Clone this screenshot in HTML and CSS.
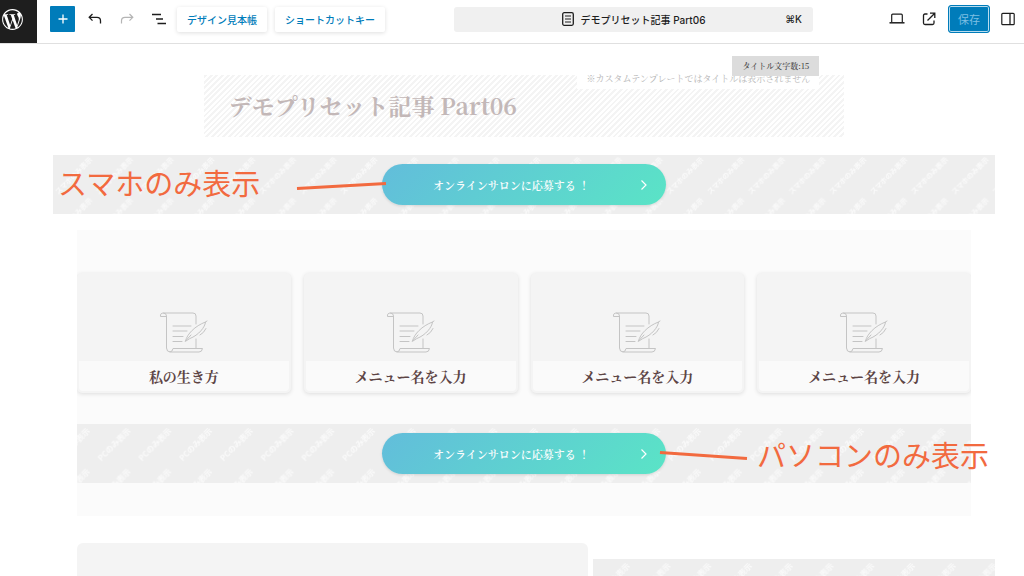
FILE: index.html
```html
<!DOCTYPE html>
<html lang="ja">
<head>
<meta charset="utf-8">
<meta name="viewport" content="width=device-width, initial-scale=1">
<title>デモプリセット記事 Part06</title>
<link rel="stylesheet" href="styles.css">
</head>
<body>
<svg class="defs" aria-hidden="true">
  <defs>
    <pattern id="sp-only" width="40.75" height="40.75" patternUnits="userSpaceOnUse">
      <text class="mark" x="20.4" y="20.4" dy="3" transform="rotate(-45 20.4 20.4)">スマホのみ表示</text>
    </pattern>
    <pattern id="pc-only" width="40.75" height="40.75" patternUnits="userSpaceOnUse">
      <text class="mark mark-pc" x="20.4" y="20.4" dy="3" transform="rotate(-45 20.4 20.4)">PCのみ表示</text>
    </pattern>
    <pattern id="pc-only-inset" width="40.75" height="40.75" patternUnits="userSpaceOnUse" patternTransform="translate(-24 0)">
      <text class="mark mark-pc" x="20.4" y="20.4" dy="3" transform="rotate(-45 20.4 20.4)">PCのみ表示</text>
    </pattern>
    <symbol id="scroll" viewBox="0 0 50 42">
      <g fill="none" stroke="#c4c4c4" stroke-width="1" stroke-linecap="round" stroke-linejoin="round">
        <path d="M7.500 4.500H1.500C1 2 2.500 1 4.500 1H34q3 0 3 3v8M4.500 1q3 0 3 3v32q0 4 4 4H40q3 0 3.500-3.500H14q-.5 3.500-3 3.500M37 27v9"/>
        <path d="M14 14h18M14 19h14M14 24.500h10M14 29.500h9"/>
        <path d="M26.500 29C28 22 36 14 46.500 10C46 15 40 23 31 26.500zM26.500 29L32 23M46.500 10l1.500-1M47 16.500Q45 21 41 23"/>
      </g>
    </symbol>
  </defs>
</svg>

<header class="toolbar">
  <a class="wp" href="#" aria-label="WordPress">
    <svg width="25" height="25" viewBox="0 0 24 24" aria-hidden="true"><path fill="#fff" d="M12.158 12.786L9.460 20.625c.806.237 1.657.366 2.540.366 1.047 0 2.051-.181 2.986-.510-.024-.038-.046-.079-.065-.124l-2.763-7.571zM3.009 12c0 3.559 2.068 6.634 5.067 8.092L3.788 8.341C3.289 9.459 3.009 10.696 3.009 12zm15.060-.454c0-1.112-.399-1.881-.741-2.480-.456-.741-.883-1.368-.883-2.109 0-.826.627-1.596 1.510-1.596.040 0 .078.005.116.007C16.472 3.904 14.340 3.009 12 3.009c-3.141 0-5.904 1.612-7.512 4.052.211.007.410.011.579.011.940 0 2.396-.114 2.396-.114.484-.028.541.684.057.741 0 0-.487.057-1.029.085l3.274 9.739 1.968-5.901-1.401-3.838c-.484-.028-.943-.085-.943-.085-.485-.029-.428-.769.057-.741 0 0 1.484.114 2.368.114.940 0 2.397-.114 2.397-.114.485-.028.542.684.057.741 0 0-.488.057-1.029.085l3.249 9.665.897-2.996c.456-1.169.684-2.137.684-2.907zm1.820-3.860c.039.286.060.593.060.924 0 .912-.171 1.938-.684 3.220l-2.746 7.940c2.673-1.558 4.470-4.454 4.470-7.771 0-1.563-.399-3.033-1.100-4.313zM12 22C6.486 22 2 17.514 2 12S6.486 2 12 2s10 4.486 10 10-4.486 10-10 10z"/></svg>
  </a>
  <div class="tools">
    <button class="add" type="button" aria-label="追加"><svg width="12" height="12" viewBox="0 0 12 12"><path d="M6 1.500v9M1.500 6h9" stroke="#fff" stroke-width="1.300"/></svg></button>
    <button class="icon" type="button" aria-label="元に戻す"><svg width="14" height="12" viewBox="0 0 14 12"><path d="M4.500 1L1.200 4.300l3.300 3.300M1.200 4.300H9q3.500 0 3.500 3.500v2.700" fill="none" stroke="#1e1e1e" stroke-width="1.300"/></svg></button>
    <button class="icon" type="button" aria-label="やり直す" disabled><svg width="14" height="12" viewBox="0 0 14 12"><path d="M9.500 1l3.300 3.300-3.300 3.300M12.800 4.300H5q-3.500 0-3.500 3.500v2.700" fill="none" stroke="#b5b5b5" stroke-width="1.200"/></svg></button>
    <button class="icon" type="button" aria-label="文書の概観"><svg width="16" height="12" viewBox="0 0 16 12"><path d="M1 1.500h9M5 6h7M6.500 10.500h8.500" stroke="#1e1e1e" stroke-width="1.400"/></svg></button>
    <button class="chip" type="button">デザイン見本帳</button>
    <button class="chip" type="button">ショートカットキー</button>
  </div>
  <button class="command" type="button">
    <span class="command-title">
      <svg width="12" height="14" viewBox="0 0 12 14"><rect x=".7" y=".7" width="10.600" height="12.600" rx="1.500" fill="none" stroke="#1e1e1e" stroke-width="1.300"/><path d="M3 4h6M3 7h6M3 10h6" stroke="#1e1e1e" stroke-width="1.200"/></svg>
      デモプリセット記事 Part06
    </span>
    <kbd>⌘K</kbd>
  </button>
  <div class="actions">
    <button class="icon" type="button" aria-label="表示"><svg width="16" height="12" viewBox="0 0 16 12"><path d="M2.700 9V2.200q0-1 1-1h8.600q1 0 1 1V9" fill="none" stroke="#1e1e1e" stroke-width="1.200"/><path d="M.5 9.800h15" stroke="#1e1e1e" stroke-width="1.500"/></svg></button>
    <button class="icon" type="button" aria-label="投稿を表示"><svg width="14" height="14" viewBox="0 0 14 14"><path d="M5.500 2H3Q1.500 2 1.500 3.500V11q0 1.500 1.500 1.500h7.500q1.500 0 1.500-1.500V8.500M8 1.200h4.800V6M12.800 1.200L5.500 8.500" fill="none" stroke="#1e1e1e" stroke-width="1.300"/></svg></button>
    <button class="save" type="button">保存</button>
    <button class="icon" type="button" aria-label="設定"><svg width="14" height="14" viewBox="0 0 14 14"><rect x=".8" y="1.300" width="12.400" height="11.400" rx="1" fill="none" stroke="#1e1e1e" stroke-width="1.200"/><path d="M9 1.300v11.400" stroke="#1e1e1e" stroke-width="1.300"/></svg></button>
  </div>
</header>

<main class="canvas">
  <div class="title-block">
    <h1>デモプリセット記事 Part06</h1>
    <p class="title-note">※カスタムテンプレートではタイトルは表示されません</p>
    <p class="title-count">タイトル文字数:15</p>
  </div>

  <section class="band">
    <svg class="marks" aria-hidden="true"><rect width="100%" height="100%" fill="url(#sp-only)"/></svg>
    <p class="callout callout-start">スマホのみ表示</p>
    <div class="cta-wrap">
      <a class="cta" href="#"><span>オンラインサロンに応募する ！</span><svg width="8" height="12" viewBox="0 0 8 12"><path d="M1.500 1.500L6 6l-4.500 4.500" fill="none" stroke="#fff" stroke-width="1.200"/></svg></a>
      <svg class="pointer pointer-start" width="92" height="10" viewBox="0 0 92 10" aria-hidden="true"><path d="M1 7.500L90 2.500" stroke="#f26a3f" stroke-width="3"/></svg>
    </div>
  </section>

  <section class="group">
    <div class="cards">
      <a class="card" href="#"><span class="card-art"><svg width="50" height="42"><use href="#scroll"/></svg></span><span class="card-name">私の生き方</span></a>
      <a class="card" href="#"><span class="card-art"><svg width="50" height="42"><use href="#scroll"/></svg></span><span class="card-name">メニュー名を入力</span></a>
      <a class="card" href="#"><span class="card-art"><svg width="50" height="42"><use href="#scroll"/></svg></span><span class="card-name">メニュー名を入力</span></a>
      <a class="card" href="#"><span class="card-art"><svg width="50" height="42"><use href="#scroll"/></svg></span><span class="card-name">メニュー名を入力</span></a>
    </div>
    <div class="band">
      <svg class="marks" aria-hidden="true"><rect width="100%" height="100%" fill="url(#pc-only-inset)"/></svg>
      <div class="cta-wrap">
        <a class="cta" href="#"><span>オンラインサロンに応募する ！</span><svg width="8" height="12" viewBox="0 0 8 12"><path d="M1.500 1.500L6 6l-4.500 4.500" fill="none" stroke="#fff" stroke-width="1.200"/></svg></a>
        <svg class="pointer pointer-end" width="90" height="12" viewBox="0 0 90 12" aria-hidden="true"><path d="M1 2.500L88 8.500" stroke="#f26a3f" stroke-width="3"/></svg>
      </div>
      <p class="callout callout-end">パソコンのみ表示</p>
    </div>
  </section>

  <section class="columns">
    <div class="panel"></div>
    <div class="band band-side">
      <svg class="marks" aria-hidden="true"><rect width="100%" height="100%" fill="url(#pc-only)"/></svg>
    </div>
  </section>
</main>
</body>
</html>
```
FILE: styles.css
```css
* { box-sizing: border-box; }

:root {
  --sans: Inter, "Noto Sans CJK JP", sans-serif;
  --serif: "Noto Serif CJK JP", "Noto Serif JP", "Liberation Serif", "Noto Sans CJK JP", serif;
  --blue: #007cba;
  --accent: #f26a3f;
}

html { height: 100%; }

body {
  min-height: 100%;
  margin: 0;
  display: flex;
  flex-direction: column;
  background: #fff;
  color: #1e1e1e;
  font-family: var(--sans);
  font-size: 10px;
}

p, h1 { margin: 0; }
a { color: inherit; text-decoration: none; }
button { margin: 0; padding: 0; border: 0; background: none; color: inherit; font: inherit; }
svg { display: block; flex: none; }

.defs { position: absolute; width: 0; height: 0; }

/* Toolbar */
.toolbar {
  flex: none;
  display: grid;
  grid-template-columns: 454px 1fr 211px;
  align-items: center;
  position: relative;
  height: 44px;
  padding-bottom: 5px;
  border-bottom: 1px solid #e0e0e0;
}

.wp {
  position: absolute;
  top: 0;
  left: 0;
  width: 37px;
  height: 43px;
  padding-top: 7px;
  background: #1e1e1e;
}

.tools { display: flex; align-items: center; padding-left: 50px; }
.icon { display: grid; place-items: center; width: 32px; height: 26px; }
.add { display: grid; place-items: center; width: 25px; height: 26px; margin-right: 4px; border-radius: 1px; background: var(--blue); }

.chip {
  height: 25px;
  margin-right: 8px;
  padding: 0 10px;
  border-radius: 2px;
  background: #fff;
  box-shadow: 0 1px 4px rgba(0, 0, 0, .13);
  color: var(--blue);
  font-weight: 500;
}

.tools .chip:nth-of-type(5) { margin-left: 2px; }

.command {
  display: grid;
  grid-template-columns: 1fr auto 1fr;
  align-items: center;
  height: 25px;
  padding: 0 11px;
  border-radius: 3px;
  background: #f0f0f0;
  font-weight: 500;
}

.command-title { grid-column: 2; display: flex; align-items: center; gap: 7px; }
.command kbd { justify-self: end; font: inherit; }

.actions { display: flex; align-items: center; justify-content: flex-end; }

.save {
  width: 42px;
  height: 28px;
  margin: 0 2px 0 3px;
  border: 1px solid var(--blue);
  border-radius: 3px;
  background: var(--blue);
  box-shadow: inset 0 0 0 1px #b8dcef;
  color: #7dbfe3;
  font-size: 11px;
}

/* Editor canvas */
.canvas {
  flex: 1;
  display: flex;
  flex-direction: column;
  padding: 31px 29px 0 53px;
  font-family: var(--serif);
}

.title-block {
  position: relative;
  display: flex;
  align-items: center;
  width: 68%;
  min-height: 62px;
  margin: 0 auto 18px;
  padding: 0 25px;
  background: repeating-linear-gradient(-45deg, #fff 0 2px, #f4f4f4 2px 4px);
}

.title-block h1 { color: #c3b8b8; font-size: 23px; font-weight: 700; line-height: 32px; }

.title-note {
  position: absolute;
  top: -5px;
  right: 25px;
  padding: 2px 9px 3px;
  background: #fff;
  color: #b5b5b5;
  font-size: 9px;
  line-height: 14px;
}

.title-count {
  position: absolute;
  top: -19px;
  right: 25px;
  padding: 0 10px;
  background: #dcdcdc;
  color: #444;
  font-size: 8px;
  font-weight: 500;
  line-height: 20px;
}

.band {
  position: relative;
  display: flex;
  align-items: center;
  justify-content: center;
  min-height: 59px;
  background: #eee;
}

.marks { position: absolute; inset: 0; width: 100%; height: 100%; }
.mark { fill: #fafafa; font: 700 7px "Noto Sans CJK JP", sans-serif; text-anchor: middle; }
.mark-pc { font-size: 8px; }

.cta-wrap { position: relative; width: 284px; }

.cta {
  display: flex;
  align-items: center;
  justify-content: space-between;
  height: 41px;
  padding: 0 18px 0 51px;
  border-radius: 21px;
  background: linear-gradient(135deg, #62bddb, #5ae4c6);
  box-shadow: 0 1px 3px rgba(0, 0, 0, .12);
  color: #fff;
  font-size: 11px;
  font-weight: 600;
}

.callout {
  position: absolute;
  color: var(--accent);
  font-family: "Noto Sans CJK JP", sans-serif;
  font-size: 29px;
  line-height: 40px;
  white-space: nowrap;
}

.callout-start { left: 5px; top: 7px; }
.callout-end { right: -18px; top: 10px; }
.pointer { position: absolute; }
.pointer-start { right: 278px; top: 17px; }
.pointer-end { left: 277px; top: 17px; }

.group { margin: 16px 24px 0; padding: 43px 0 33px; background: #fbfbfb; }

.cards {
  display: grid;
  grid-template-columns: repeat(4, 1fr);
  gap: 13px;
  margin-bottom: 31px;
  overflow-x: clip;
}

.card {
  display: flex;
  flex-direction: column;
  padding: 0 2px 2px;
  border-radius: 5px;
  background: #f4f4f4;
  box-shadow: 0 1px 4px rgba(0, 0, 0, .12);
}

.card-art { display: grid; place-items: end center; height: 88px; padding-bottom: 7px; }

.card-name {
  border-radius: 0 0 4px 4px;
  background: #fafafa;
  color: #5d4545;
  font-size: 14px;
  font-weight: 700;
  line-height: 30px;
  text-align: center;
}

.columns {
  flex: 1;
  display: grid;
  grid-template-columns: 511fr 402fr;
  gap: 5px;
  margin: 27px 0 0 24px;
}

.panel { border-radius: 6px 6px 0 0; background: #f4f4f4; }
.band-side { min-height: 16px; margin-top: 16px; }
```
